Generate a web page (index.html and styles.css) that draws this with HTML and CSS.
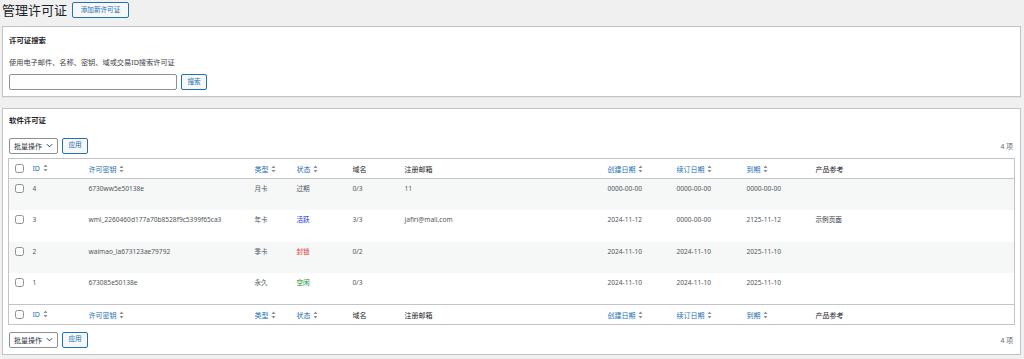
FILE: index.html
```html
<!DOCTYPE html>
<html lang="zh-CN">
<head>
<meta charset="utf-8">
<title>管理许可证</title>
<link rel="stylesheet" href="styles.css">
</head>
<body>
<div class="wrap">
  <div class="page-head">
    <h1 class="page-title">管理许可证</h1>
    <a class="btn btn-add" href="#">添加新许可证</a>
  </div>

  <section class="panel search-panel">
    <h2 class="panel-title">许可证搜索</h2>
    <p class="desc">使用电子邮件、名称、密钥、域或交易ID搜索许可证</p>
    <div class="search-row">
      <input class="search-input" type="text">
      <button class="btn">搜索</button>
    </div>
  </section>

  <section class="panel list-panel">
    <h2 class="panel-title">软件许可证</h2>
    <div class="tablenav top">
      <div class="actions">
        <span class="select">批量操作 <svg class="chev" viewBox="0 0 8 5" width="7" height="5"><path d="M1 1l3 3 3-3" fill="none" stroke="#1d2327" stroke-width="1"/></svg></span>
        <button class="btn">应用</button>
      </div>
      <span class="count">4 项</span>
    </div>

    <table class="list">
      <colgroup>
        <col style="width:20px"><col style="width:56px"><col style="width:166px"><col style="width:42px"><col style="width:56px"><col style="width:52px"><col style="width:203px"><col style="width:69px"><col style="width:70px"><col style="width:69px"><col style="width:203px">
      </colgroup>
      <thead>
        <tr>
          <th class="cb"><span class="check"></span></th>
          <th class="sort">ID <svg class="si" viewBox="0 0 5 8" width="5" height="8"><path d="M2.5 0.5L4.5 3H0.5z M2.5 7.5L4.5 5H0.5z" fill="#8c8f94"/></svg></th>
          <th class="sort">许可密钥 <svg class="si" viewBox="0 0 5 8" width="5" height="8"><path d="M2.5 0.5L4.5 3H0.5z M2.5 7.5L4.5 5H0.5z" fill="#8c8f94"/></svg></th>
          <th class="sort">类型 <svg class="si" viewBox="0 0 5 8" width="5" height="8"><path d="M2.5 0.5L4.5 3H0.5z M2.5 7.5L4.5 5H0.5z" fill="#8c8f94"/></svg></th>
          <th class="sort">状态 <svg class="si" viewBox="0 0 5 8" width="5" height="8"><path d="M2.5 0.5L4.5 3H0.5z M2.5 7.5L4.5 5H0.5z" fill="#8c8f94"/></svg></th>
          <th>域名</th>
          <th>注册邮箱</th>
          <th class="sort">创建日期 <svg class="si" viewBox="0 0 5 8" width="5" height="8"><path d="M2.5 0.5L4.5 3H0.5z M2.5 7.5L4.5 5H0.5z" fill="#8c8f94"/></svg></th>
          <th class="sort">续订日期 <svg class="si" viewBox="0 0 5 8" width="5" height="8"><path d="M2.5 0.5L4.5 3H0.5z M2.5 7.5L4.5 5H0.5z" fill="#8c8f94"/></svg></th>
          <th class="sort">到期 <svg class="si" viewBox="0 0 5 8" width="5" height="8"><path d="M2.5 0.5L4.5 3H0.5z M2.5 7.5L4.5 5H0.5z" fill="#8c8f94"/></svg></th>
          <th>产品参考</th>
        </tr>
      </thead>
      <tbody>
        <tr class="alt">
          <td class="cb"><span class="check"></span></td>
          <td>4</td><td>6730ww5e50138e</td><td>月卡</td><td class="st-expired">过期</td><td>0/3</td><td>11</td><td>0000-00-00</td><td>0000-00-00</td><td>0000-00-00</td><td></td>
        </tr>
        <tr>
          <td class="cb"><span class="check"></span></td>
          <td>3</td><td>wml_2260460d177a70b8528f9c5399f65ca3</td><td>年卡</td><td class="st-active">活跃</td><td>3/3</td><td>jafiri@mail.com</td><td>2024-11-12</td><td>0000-00-00</td><td>2125-11-12</td><td class="dark">示例页面</td>
        </tr>
        <tr class="alt">
          <td class="cb"><span class="check"></span></td>
          <td>2</td><td>waimao_la673123ae79792</td><td>季卡</td><td class="st-blocked">封锁</td><td>0/2</td><td></td><td>2024-11-10</td><td>2024-11-10</td><td>2025-11-10</td><td></td>
        </tr>
        <tr>
          <td class="cb"><span class="check"></span></td>
          <td>1</td><td>673085e50138e</td><td>永久</td><td class="st-idle">空闲</td><td>0/3</td><td></td><td>2024-11-10</td><td>2024-11-10</td><td>2025-11-10</td><td></td>
        </tr>
      </tbody>
      <tfoot>
        <tr>
          <th class="cb"><span class="check"></span></th>
          <th class="sort">ID <svg class="si" viewBox="0 0 5 8" width="5" height="8"><path d="M2.5 0.5L4.5 3H0.5z M2.5 7.5L4.5 5H0.5z" fill="#8c8f94"/></svg></th>
          <th class="sort">许可密钥 <svg class="si" viewBox="0 0 5 8" width="5" height="8"><path d="M2.5 0.5L4.5 3H0.5z M2.5 7.5L4.5 5H0.5z" fill="#8c8f94"/></svg></th>
          <th class="sort">类型 <svg class="si" viewBox="0 0 5 8" width="5" height="8"><path d="M2.5 0.5L4.5 3H0.5z M2.5 7.5L4.5 5H0.5z" fill="#8c8f94"/></svg></th>
          <th class="sort">状态 <svg class="si" viewBox="0 0 5 8" width="5" height="8"><path d="M2.5 0.5L4.5 3H0.5z M2.5 7.5L4.5 5H0.5z" fill="#8c8f94"/></svg></th>
          <th>域名</th>
          <th>注册邮箱</th>
          <th class="sort">创建日期 <svg class="si" viewBox="0 0 5 8" width="5" height="8"><path d="M2.5 0.5L4.5 3H0.5z M2.5 7.5L4.5 5H0.5z" fill="#8c8f94"/></svg></th>
          <th class="sort">续订日期 <svg class="si" viewBox="0 0 5 8" width="5" height="8"><path d="M2.5 0.5L4.5 3H0.5z M2.5 7.5L4.5 5H0.5z" fill="#8c8f94"/></svg></th>
          <th class="sort">到期 <svg class="si" viewBox="0 0 5 8" width="5" height="8"><path d="M2.5 0.5L4.5 3H0.5z M2.5 7.5L4.5 5H0.5z" fill="#8c8f94"/></svg></th>
          <th>产品参考</th>
        </tr>
      </tfoot>
    </table>

    <div class="tablenav bottom">
      <div class="actions">
        <span class="select">批量操作 <svg class="chev" viewBox="0 0 8 5" width="7" height="5"><path d="M1 1l3 3 3-3" fill="none" stroke="#1d2327" stroke-width="1"/></svg></span>
        <button class="btn">应用</button>
      </div>
      <span class="count">4 项</span>
    </div>
  </section>
</div>
</body>
</html>
```

FILE: styles.css
```css
* { box-sizing: border-box; }
html, body {
  margin: 0;
  padding: 0;
  background: #f0f0f1;
  font-family: "Noto Sans", "Noto Sans CJK SC", sans-serif;
  color: #3c434a;
  font-size: 7.2px;
}
.wrap {
  margin: 0 3px 0 2px;
}
.page-head {
  display: flex;
  align-items: center;
  height: 20px;
  gap: 5px;
}
.page-title {
  margin: 0;
  font-size: 13px;
  font-weight: 400;
  color: #1d2327;
  line-height: 20px;
}
.btn {
  display: inline-flex;
  align-items: center;
  justify-content: center;
  height: 16px;
  padding: 0 5px;
  border: 1px solid #2271b1;
  border-radius: 2px;
  background: #f6f7f7;
  color: #2271b1;
  font-family: inherit;
  font-size: 6.6px;
  text-decoration: none;
  line-height: 1;
}
.btn-add {
  width: 57px;
  padding: 0;
}
.panel {
  background: #fff;
  border: 1px solid #c3c4c7;
  box-shadow: 0 1px 1px rgba(0,0,0,0.04);
}
.search-panel {
  margin-top: 6px;
  height: 71px;
  padding: 8px 6px 0;
}
.panel-title {
  margin: 0;
  font-size: 7.4px;
  font-weight: 700;
  line-height: 10px;
  color: #1d2327;
}
.desc {
  margin: 12px 0 0;
  line-height: 10px;
  color: #3c434a;
}
.search-row {
  display: flex;
  gap: 4px;
  margin-top: 7px;
}
.search-input {
  width: 168px;
  height: 16px;
  border: 1px solid #8c8f94;
  border-radius: 2px;
  background: #fff;
  margin: 0;
  padding: 0;
}
.search-row .btn { width: 26px; padding: 0; }

.list-panel {
  margin-top: 11px;
  height: 247px;
  padding: 6px 6px 0 5px;
}
.list-panel .panel-title { padding-left: 1px; }
.tablenav {
  display: flex;
  justify-content: space-between;
  align-items: center;
  padding-left: 1px;
  height: 17px;
}
.tablenav.top { margin-top: 12px; }
.tablenav.bottom { margin-top: 6px; }
.actions {
  display: flex;
  gap: 4px;
  align-items: center;
}
.select {
  display: inline-flex;
  align-items: center;
  justify-content: space-between;
  width: 49px;
  height: 16px;
  padding: 0 4px 0 4px;
  border: 1px solid #8c8f94;
  border-radius: 2px;
  color: #2c3338;
  font-size: 7px;
  background: #fff;
}
.chev { display: block; }
.tablenav .btn { width: 26px; padding: 0; }
.count {
  color: #646970;
  font-size: 6.8px;
  padding-right: 1px;
}

.list {
  margin-top: 4px;
  width: 1006px;
  table-layout: fixed;
  border-collapse: collapse;
  border: 1px solid #c3c4c7;
  background: #fff;
}
.list th {
  text-align: left;
  font-weight: 400;
  height: 20px;
  padding: 0 0 0 4px;
  color: #1d2327;
  font-size: 7px;
  white-space: nowrap;
  vertical-align: middle;
}
.list thead th { border-bottom: 1px solid #c3c4c7; }
.list tfoot th { border-top: 1px solid #c3c4c7; }
.list th.sort { color: #2271b1; }
.si { vertical-align: -1px; margin-left: 1px; }
.list td {
  height: 31.5px;
  padding: 5px 0 0 4px;
  vertical-align: top;
  line-height: 9px;
  font-size: 6.6px;
  color: #50575e;
  white-space: nowrap;
  overflow: hidden;
}
.list tr.alt td { background: #f6f7f7; }
.list .cb { padding: 0 0 0 6px; }
.list td.cb { padding-top: 5px; }
.check {
  display: block;
  width: 9px;
  height: 9px;
  border: 1px solid #8c8f94;
  border-radius: 2.5px;
  background: #fff;
}
.list td.dark { color: #2c3338; }
.st-expired { }
.list td.st-active { color: #1a2bd6; }
.list td.st-blocked { color: #d63638; }
.list td.st-idle { color: #008a20; }
```
